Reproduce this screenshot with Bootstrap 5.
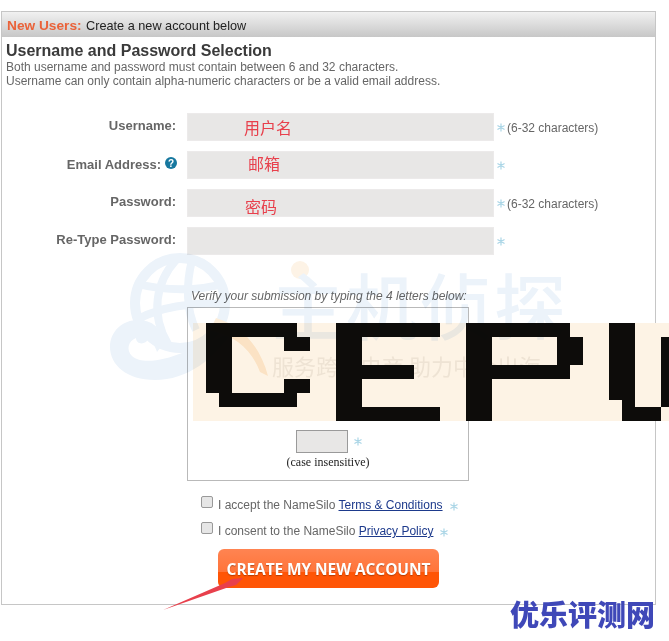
<!DOCTYPE html>
<html lang="en">
<head>
<meta charset="utf-8">
<title>New Users</title>
<link href="https://cdn.jsdelivr.net/npm/bootstrap@5.3.0/dist/css/bootstrap.min.css" rel="stylesheet">
<style>
html,body{width:669px;height:641px;overflow:hidden;background:#fff}
body{font-family:"Liberation Sans",Arial,sans-serif;font-size:12px;color:#666;position:relative;padding:11px 0 0 1px}
.ns-panel{width:655px;height:594px;border:1px solid #c6c6c6}
.ns-head{height:25px;background:linear-gradient(#f1f1f1,#c7c7c7);padding-left:5px;color:#222;font-size:12.7px;line-height:27px;white-space:nowrap}
.ns-head b{color:#ea6239;font-size:13.7px;margin-right:1px}
.ns-body{padding:4px 5px 0 4px}
.ns-title{font-size:16px;font-weight:700;color:#3a3a3a;line-height:19px;margin:0}
.ns-desc{line-height:14px;margin:0 0 25px;color:#666}
.ns-row{height:28px;margin-bottom:10px}
.ns-label{width:170px;text-align:right;font-size:13px;font-weight:700;color:#666;line-height:14px;align-self:flex-start;padding-top:6px;margin:0 11px 0 0;flex:none;white-space:nowrap}
.ns-help{display:inline-block;vertical-align:0;margin:0 -1px 0 4px;width:12px;height:12px}
.form-control.ns-input{width:307px;height:28px;flex:none;border:0;border-radius:0;background:#e8e7e6;box-shadow:inset 0 0 0 1px #eceaea;padding:0;font-family:"Liberation Sans","Noto Sans CJK SC",sans-serif;font-size:16px;line-height:20px;color:#e8404c}
.ns-u{padding-left:57px!important}
.ns-e{padding-left:61px!important;padding-bottom:5px!important}
.ns-p{padding-left:58px!important;padding-top:5px!important}
.ns-star{width:8px;height:9px;flex:none;stroke:#a9d5e6;stroke-width:1.3;stroke-linecap:round}
.ns-hint{margin-left:2px;color:#666;white-space:nowrap;position:relative;top:1px}
.ns-mid .ns-star{margin-left:3px}
.ns-verify{font-style:italic;margin:34px 0 4px 185px;line-height:14px;color:#666}
.ns-capbox{margin-left:181px;width:282px;height:174px;border:1px solid #b9b9b9;padding-top:15px;padding-left:5px}
.ns-capimg{display:block;width:476px;height:98px;overflow:visible}
.ns-capinput{gap:6px;margin:8px 0 0 103px;height:24px}
.form-control.ns-code{width:52px;height:23px;flex:none;border:1px solid #9a9a9a;border-radius:0;background:#e8e7e6;padding:0}
.ns-case{font-family:"Liberation Serif",serif;font-size:12px;color:#222;text-align:center;width:270px;line-height:14px;margin-top:2px}
.ns-check{margin-left:195px;line-height:14px;height:14px;gap:5px;white-space:nowrap;color:#666}
.ns-check1{margin-top:17px}
.ns-check2{margin-top:12px}
.form-check-input.ns-box{width:12px;height:12px;margin:0;flex:none;border:1px solid #999;border-radius:2px;background:#e6e6e6;position:relative;top:-3px}
.ns-check a{color:#1d3a8c}
.ns-check .ns-star{margin-left:2px;margin-top:3px}
.btn.ns-btn{display:block;width:221px;height:39px;margin:11px 0 0 212px;padding:0;border:0;border-radius:6px;background:linear-gradient(#ff8452 0,#ff7439 59%,#ff5506 60%,#ff5506 100%);color:#fff;font-family:"Open Sans",sans-serif;font-weight:700;font-size:15.5px;line-height:36px;text-shadow:0 1px 1px rgba(120,40,0,.55);white-space:nowrap;letter-spacing:-.1px}
.ns-mark{position:absolute;left:0;top:0;width:669px;height:641px;pointer-events:none;mix-blend-mode:multiply}
.ns-wm1{position:absolute;left:272px;top:253px;font-family:"Noto Sans CJK SC",sans-serif;font-weight:500;font-size:72px;line-height:100px;color:#ecf3fa;letter-spacing:2px;white-space:nowrap}
.ns-wm2{position:absolute;left:272px;top:350px;font-family:"Noto Sans CJK SC",sans-serif;font-size:22px;line-height:30px;color:#f0efec;white-space:nowrap}
.ns-arrow{position:absolute;left:0;top:0;width:669px;height:641px;pointer-events:none}
.ns-logo{position:absolute;left:510px;top:593px;font-family:"Noto Sans CJK SC",sans-serif;font-weight:900;font-size:29px;line-height:40px;color:#3f48b8;white-space:nowrap}
</style>
</head>
<body>
<svg width="0" height="0" class="position-absolute"><defs><symbol id="ns-ast" viewBox="0 0 9 9"><path d="M4.5.5v8M1 2.5l7 4M8 2.5l-7 4"/></symbol></defs></svg>
<div class="ns-panel">
  <div class="ns-head"><b>New Users:</b> Create a new account below</div>
  <div class="ns-body">
    <h2 class="ns-title">Username and Password Selection</h2>
    <p class="ns-desc">Both username and password must contain between 6 and 32 characters.<br>Username can only contain alpha-numeric characters or be a valid email address.</p>
    <form>
      <div class="ns-row d-flex align-items-center ns-mid">
        <label class="ns-label">Username:</label>
        <input class="form-control ns-input ns-u" value="用户名">
        <svg class="ns-star"><use href="#ns-ast"/></svg><span class="ns-hint">(6-32 characters)</span>
      </div>
      <div class="ns-row d-flex align-items-center ns-mid">
        <label class="ns-label">Email Address:<svg class="ns-help" viewBox="0 0 12 12"><circle cx="6" cy="6" r="6" fill="#17789f"/><text x="6" y="9.6" text-anchor="middle" font-size="10" font-weight="700" fill="#fff" font-family="Liberation Sans">?</text></svg></label>
        <input class="form-control ns-input ns-e" value="邮箱">
        <svg class="ns-star"><use href="#ns-ast"/></svg>
      </div>
      <div class="ns-row d-flex align-items-center ns-mid">
        <label class="ns-label">Password:</label>
        <input class="form-control ns-input ns-p" value="密码">
        <svg class="ns-star"><use href="#ns-ast"/></svg><span class="ns-hint">(6-32 characters)</span>
      </div>
      <div class="ns-row d-flex align-items-center ns-mid">
        <label class="ns-label">Re-Type Password:</label>
        <input class="form-control ns-input">
        <svg class="ns-star"><use href="#ns-ast"/></svg>
      </div>
      <p class="ns-verify">Verify your submission by typing the 4 letters below:</p>
      <div class="ns-capbox">
        <svg class="ns-capimg" viewBox="193 323 476 98">
          <rect x="193" y="323" width="476" height="98" fill="#fdf3e5"/>
          <g fill="#0d0c0a">
            <path d="M219 323h78v14h13v14h-26v-14h-52v56h52v-14h26v14h-13v14h-78v-14h-13v-70h13z"/>
            <path d="M336 323h104v14h-78v28h52v14h-52v28h78v14h-104z"/>
            <path d="M466 323h104v14h13v28h-13v14h-78v42h-26zM492 337v28h65v-28z" fill-rule="evenodd"/>
            <path d="M609 323h26v84h-13v-7h-13zM622 407h39v14h-39zM661 337h8v70h-8z"/>
          </g>
        </svg>
        <div class="ns-capinput d-flex align-items-center">
          <input class="form-control ns-code">
          <svg class="ns-star"><use href="#ns-ast"/></svg>
        </div>
        <div class="ns-case">(case insensitive)</div>
      </div>
      <div class="ns-check ns-check1 d-flex align-items-center">
        <input type="checkbox" class="form-check-input ns-box"><span>I accept the NameSilo <a href="#">Terms &amp; Conditions</a></span><svg class="ns-star"><use href="#ns-ast"/></svg>
      </div>
      <div class="ns-check ns-check2 d-flex align-items-center">
        <input type="checkbox" class="form-check-input ns-box"><span>I consent to the NameSilo <a href="#">Privacy Policy</a></span><svg class="ns-star"><use href="#ns-ast"/></svg>
      </div>
      <button type="button" class="btn ns-btn">CREATE MY NEW ACCOUNT</button>
    </form>
  </div>
</div>

<div class="ns-mark" aria-hidden="true">
  <svg width="669" height="641" class="position-absolute top-0 start-0" fill="none">
    <circle cx="180" cy="303" r="45" stroke="#ecf3fa" stroke-width="10"/>
    <path d="M176 260c-20 22-26 54-8 84M192 260c-6 24-6 50 4 70M138 284c26 7 62 7 84 0M140 318c20-10 50-16 80-14" stroke="#ecf3fa" stroke-width="8"/>
    <path d="M233 331c-18 28-46 49-78 49c-28 0-45-15-45-33c0-16 13-27 28-27c14 0 24 8 26 23l-7 9c-2-6-5-11-9-13c-2 6-12 6-12-1c-8 3-10 12-4 18c10 9 32 4 50-3c18-7 36-15 51-22z" fill="#ecf3fa"/>
    <path d="M216 318c26 8 44 28 52 58l-8-4c-8-22-24-36-50-42z" fill="#fdeeda"/>
    <circle cx="300" cy="270" r="9" fill="#fdf3e6"/>
  </svg>
  <div class="ns-wm1">主机侦探</div>
  <div class="ns-wm2">服务跨境电商 助力中企出海</div>
</div>

<svg class="ns-arrow" aria-hidden="true"><polygon points="163,610 225,583 232,579 243,578 236,585 229,587" fill="#e8404c"/></svg>
<div class="ns-logo">优乐评测网</div>
<script src="https://cdn.jsdelivr.net/npm/bootstrap@5.3.0/dist/js/bootstrap.bundle.min.js"></script>
</body>
</html>
